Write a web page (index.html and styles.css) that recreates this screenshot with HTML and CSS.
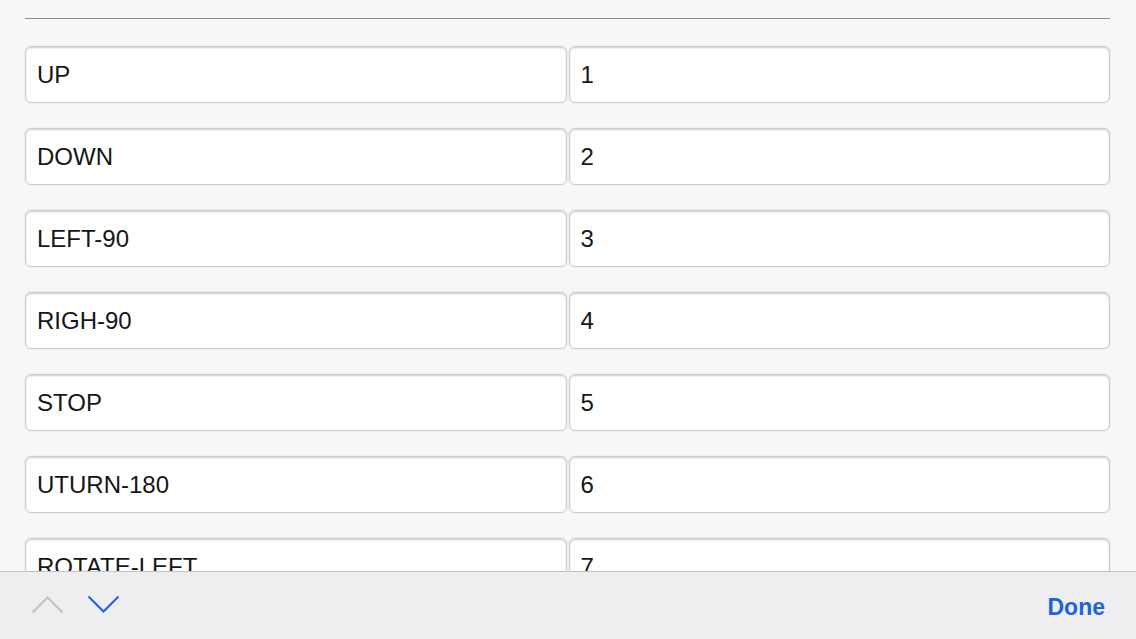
FILE: index.html
```html
<!DOCTYPE html>
<html lang="en">
<head>
<meta charset="UTF-8">
<meta name="viewport" content="width=device-width, initial-scale=1.0">
<title>Commands</title>
<link rel="stylesheet" href="styles.css">
</head>
<body>
<div class="page">
    <div class="divider"></div>
    <div class="fields">
        <input class="field" type="text" value="UP">
        <input class="field" type="text" value="1">
        <input class="field" type="text" value="DOWN">
        <input class="field" type="text" value="2">
        <input class="field" type="text" value="LEFT-90">
        <input class="field" type="text" value="3">
        <input class="field" type="text" value="RIGH-90">
        <input class="field" type="text" value="4">
        <input class="field" type="text" value="STOP">
        <input class="field" type="text" value="5">
        <input class="field" type="text" value="UTURN-180">
        <input class="field" type="text" value="6">
        <input class="field" type="text" value="ROTATE-LEFT">
        <input class="field" type="text" value="7">
    </div>
</div>
<div class="keybar">
    <div class="arrows">
        <svg class="arrow arrow-off" width="33" height="19" viewBox="0 0 33 19">
            <polyline points="1.5,17.5 16.5,2.5 31.5,17.5" fill="none" stroke="currentColor" stroke-width="2"/>
        </svg>
        <svg class="arrow arrow-on" width="33" height="19" viewBox="0 0 33 19">
            <polyline points="1.5,1.5 16.5,16.5 31.5,1.5" fill="none" stroke="currentColor" stroke-width="2"/>
        </svg>
    </div>
    <button class="done">Done</button>
</div>
</body>
</html>
```
FILE: styles.css
```css
html, body {
    margin: 0;
    height: 100%;
    overflow: hidden;
}
body {
    background: #f7f7f9;
    font-family: "Liberation Sans", Arial, sans-serif;
}
.page {
    padding: 0 26px 0 25px;
}
.divider {
    height: 18px;
    border-bottom: 1px solid #8c8c8e;
}
.fields {
    display: grid;
    grid-template-columns: 1fr 1fr;
    column-gap: 2px;
    row-gap: 25px;
    margin-top: 27px;
}
.field {
    box-sizing: border-box;
    width: 100%;
    height: 57px;
    margin: 0;
    padding: 0 11px;
    border: 1px solid #cdcdcf;
    border-radius: 6px;
    box-shadow: 0 0 0 1px rgba(0, 0, 0, 0.03), inset 0 1px 2px rgba(0, 0, 0, 0.2);
    background: #fff;
    font-family: "Liberation Sans", Arial, sans-serif;
    font-size: 24px;
    color: #161616;
    outline: none;
}
.keybar {
    position: fixed;
    left: 0;
    right: 0;
    bottom: 0;
    height: 68px;
    box-sizing: border-box;
    border-top: 1px solid #c4c4c6;
    background: #eeeef0;
    display: flex;
    align-items: center;
    justify-content: space-between;
    padding: 0 31px 0 31px;
}
.arrows {
    display: flex;
    gap: 23px;
    margin-top: -2px;
}
.arrow {
    display: block;
}
.arrow-off {
    color: #c2c2c4;
}
.arrow-on {
    color: #1c64d8;
}
.done {
    border: none;
    background: none;
    padding: 0;
    margin-top: 3px;
    font-family: "Liberation Sans", Arial, sans-serif;
    font-weight: bold;
    font-size: 23px;
    color: #1c64d8;
}
```
